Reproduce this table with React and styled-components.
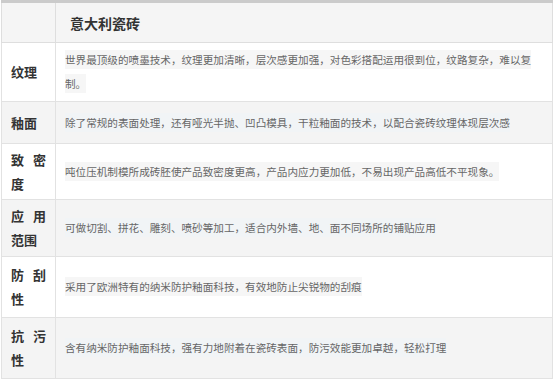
import React from 'react';
import styled, { createGlobalStyle } from 'styled-components';

const GlobalStyle = createGlobalStyle`
  body {
    margin: 0;
    background: #fff;
    font-family: "Noto Sans CJK SC", "Noto Sans", sans-serif;
  }
`;

const Table = styled.table`
  width: 552px;
  margin-left: 1px;
  border-collapse: collapse;
  border-top: 3px solid #cbcbcb;
  table-layout: fixed;
`;

const Row = styled.tr`
  height: ${p => p.$h}px;
  background: ${p => (p.$shade ? '#f4f4f4' : '#fff')};
`;

const HeadCell = styled.th`
  height: 39px;
  padding: 0 0 0 14px;
  background: #f5f5f5;
  border: 1px solid #dedede;
  text-align: left;
  font-size: 14px;
  font-weight: 700;
  color: #333;
  &:first-child {
    width: 53px;
    padding: 0;
  }
`;

const Label = styled.td`
  width: 35px;
  padding: 0 9px;
  border: 1px solid #e2e2e2;
  font-size: 13px;
  font-weight: 700;
  line-height: 24px;
  color: #333;
  text-align: justify;
  vertical-align: middle;
`;

const Content = styled.td`
  padding: 0 9px;
  border: 1px solid #e2e2e2;
  font-size: 10.6px;
  line-height: 24px;
  color: #666;
  vertical-align: middle;
`;

const Mark = styled.span`
  background: ${p => (p.$shade ? '#f1f4f6' : '#f6f6f6')};
  padding: 2px 0;
`;

const rows = [
  {
    label: '纹理',
    text: '世界最顶级的喷墨技术，纹理更加清晰，层次感更加强，对色彩搭配运用很到位，纹路复杂，难以复制。',
    h: 59,
  },
  {
    label: '釉面',
    text: '除了常规的表面处理，还有哑光半抛、凹凸模具，干粒釉面的技术，以配合瓷砖纹理体现层次感',
    h: 42,
  },
  {
    label: '致密度',
    text: '吨位压机制模所成砖胚使产品致密度更高，产品内应力更加低，不易出现产品高低不平现象。',
    h: 56,
  },
  {
    label: '应用范围',
    text: '可做切割、拼花、雕刻、喷砂等加工，适合内外墙、地、面不同场所的铺贴应用',
    h: 57,
  },
  {
    label: '防刮性',
    text: '采用了欧洲特有的纳米防护釉面科技，有效地防止尖锐物的刮痕',
    h: 61,
  },
  {
    label: '抗污性',
    text: '含有纳米防护釉面科技，强有力地附着在瓷砖表面，防污效能更加卓越，轻松打理',
    h: 61,
  },
];

const App = () => {
  return (
    <>
      <GlobalStyle />
      <Table>
        <thead>
          <tr>
            <HeadCell />
            <HeadCell>意大利瓷砖</HeadCell>
          </tr>
        </thead>
        <tbody>
          {rows.map((r, i) => (
            <Row key={r.label} $h={r.h} $shade={i % 2 === 1}>
              <Label>{r.label}</Label>
              <Content>
                <Mark $shade={i % 2 === 1}>{r.text}</Mark>
              </Content>
            </Row>
          ))}
        </tbody>
      </Table>
    </>
  );
};

export default App;
